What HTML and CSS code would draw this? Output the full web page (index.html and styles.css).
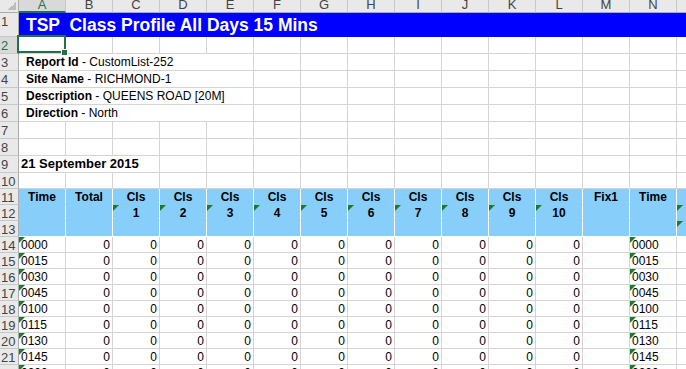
FILE: index.html
```html
<!DOCTYPE html>
<html lang="en">
<head>
    <meta charset="UTF-8">
    <title>TSP Class Profile All Days 15 Mins</title>
    <link rel="stylesheet" href="styles.css">
</head>
<body>
<div class="sheet">
    <!-- column headers -->
    <div class="corner"></div>
    <div class="ch sel">A</div><div class="ch">B</div><div class="ch">C</div><div class="ch">D</div><div class="ch">E</div>
    <div class="ch">F</div><div class="ch">G</div><div class="ch">H</div><div class="ch">I</div><div class="ch">J</div>
    <div class="ch">K</div><div class="ch">L</div><div class="ch">M</div><div class="ch">N</div><div class="ch">O</div>

    <!-- 1 -->
    <div class="rh">1</div>
    <div class="title">TSP  Class Profile All Days 15 Mins</div>

    <!-- 2 -->
    <div class="rh sel">2</div>
    <div class="cur"><span class="handle"></span></div>
    <div></div><div></div><div></div><div></div><div></div><div></div><div></div>
    <div></div><div></div><div></div><div></div><div></div><div></div><div></div>

    <!-- 3 -->
    <div class="rh">3</div>
    <div class="info"><b>Report Id</b> - CustomList-252</div>
    <div></div><div></div><div></div><div></div><div></div><div></div><div></div><div></div><div></div><div></div>

    <!-- 4 -->
    <div class="rh">4</div>
    <div class="info"><b>Site Name</b> - RICHMOND-1</div>
    <div></div><div></div><div></div><div></div><div></div><div></div><div></div><div></div><div></div><div></div>

    <!-- 5 -->
    <div class="rh">5</div>
    <div class="info"><b>Description</b> - QUEENS ROAD [20M]</div>
    <div></div><div></div><div></div><div></div><div></div><div></div><div></div><div></div><div></div><div></div>

    <!-- 6 -->
    <div class="rh">6</div>
    <div class="info"><b>Direction</b> - North</div>
    <div></div><div></div><div></div><div></div><div></div><div></div><div></div><div></div><div></div><div></div>

    <!-- 7 -->
    <div class="rh">7</div>
    <div></div><div></div><div></div><div></div><div></div><div></div><div></div><div></div>
    <div></div><div></div><div></div><div></div><div></div><div></div><div></div>

    <!-- 8 -->
    <div class="rh">8</div>
    <div></div><div></div><div></div><div></div><div></div><div></div><div></div><div></div>
    <div></div><div></div><div></div><div></div><div></div><div></div><div></div>

    <!-- 9 -->
    <div class="rh">9</div>
    <div class="date">21 September 2015</div>
    <div></div><div></div><div></div><div></div><div></div><div></div>
    <div></div><div></div><div></div><div></div><div></div><div></div>

    <!-- 10 -->
    <div class="rh">10</div>
    <div></div><div></div><div></div><div></div><div></div><div></div><div></div><div></div>
    <div></div><div></div><div></div><div></div><div></div><div></div><div></div>

    <!-- 11: table header -->
    <div class="rh">11</div>
    <div class="hd">Time</div><div class="hd">Total</div>
    <div class="hd">Cls</div><div class="hd">Cls</div><div class="hd">Cls</div><div class="hd">Cls</div><div class="hd">Cls</div>
    <div class="hd">Cls</div><div class="hd">Cls</div><div class="hd">Cls</div><div class="hd">Cls</div><div class="hd">Cls</div>
    <div class="hd">Fix1</div><div class="hd">Time</div><div class="hd"></div>

    <!-- 12 -->
    <div class="rh">12</div>
    <div class="hd"></div><div class="hd"></div>
    <div class="hd err">1</div><div class="hd err">2</div><div class="hd err">3</div><div class="hd err">4</div><div class="hd err">5</div>
    <div class="hd err">6</div><div class="hd err">7</div><div class="hd err">8</div><div class="hd err">9</div><div class="hd err">10</div>
    <div class="hd"></div><div class="hd"></div><div class="hd err"></div>

    <!-- 13 -->
    <div class="rh">13</div>
    <div class="hd end"></div><div class="hd end"></div><div class="hd end"></div><div class="hd end"></div><div class="hd end"></div>
    <div class="hd end"></div><div class="hd end"></div><div class="hd end"></div><div class="hd end"></div><div class="hd end"></div>
    <div class="hd end"></div><div class="hd end"></div><div class="hd end"></div><div class="hd end"></div><div class="hd end err"></div>

    <!-- 14 -->
    <div class="rh">14</div>
    <div class="err">0000</div>
    <div class="num">0</div><div class="num">0</div><div class="num">0</div><div class="num">0</div><div class="num">0</div><div class="num">0</div>
    <div class="num">0</div><div class="num">0</div><div class="num">0</div><div class="num">0</div><div class="num">0</div>
    <div></div><div class="err">0000</div><div></div>

    <!-- 15 -->
    <div class="rh">15</div>
    <div class="err">0015</div>
    <div class="num">0</div><div class="num">0</div><div class="num">0</div><div class="num">0</div><div class="num">0</div><div class="num">0</div>
    <div class="num">0</div><div class="num">0</div><div class="num">0</div><div class="num">0</div><div class="num">0</div>
    <div></div><div class="err">0015</div><div></div>

    <!-- 16 -->
    <div class="rh">16</div>
    <div class="err">0030</div>
    <div class="num">0</div><div class="num">0</div><div class="num">0</div><div class="num">0</div><div class="num">0</div><div class="num">0</div>
    <div class="num">0</div><div class="num">0</div><div class="num">0</div><div class="num">0</div><div class="num">0</div>
    <div></div><div class="err">0030</div><div></div>

    <!-- 17 -->
    <div class="rh">17</div>
    <div class="err">0045</div>
    <div class="num">0</div><div class="num">0</div><div class="num">0</div><div class="num">0</div><div class="num">0</div><div class="num">0</div>
    <div class="num">0</div><div class="num">0</div><div class="num">0</div><div class="num">0</div><div class="num">0</div>
    <div></div><div class="err">0045</div><div></div>

    <!-- 18 -->
    <div class="rh">18</div>
    <div class="err">0100</div>
    <div class="num">0</div><div class="num">0</div><div class="num">0</div><div class="num">0</div><div class="num">0</div><div class="num">0</div>
    <div class="num">0</div><div class="num">0</div><div class="num">0</div><div class="num">0</div><div class="num">0</div>
    <div></div><div class="err">0100</div><div></div>

    <!-- 19 -->
    <div class="rh">19</div>
    <div class="err">0115</div>
    <div class="num">0</div><div class="num">0</div><div class="num">0</div><div class="num">0</div><div class="num">0</div><div class="num">0</div>
    <div class="num">0</div><div class="num">0</div><div class="num">0</div><div class="num">0</div><div class="num">0</div>
    <div></div><div class="err">0115</div><div></div>

    <!-- 20 -->
    <div class="rh">20</div>
    <div class="err">0130</div>
    <div class="num">0</div><div class="num">0</div><div class="num">0</div><div class="num">0</div><div class="num">0</div><div class="num">0</div>
    <div class="num">0</div><div class="num">0</div><div class="num">0</div><div class="num">0</div><div class="num">0</div>
    <div></div><div class="err">0130</div><div></div>

    <!-- 21 -->
    <div class="rh">21</div>
    <div class="err">0145</div>
    <div class="num">0</div><div class="num">0</div><div class="num">0</div><div class="num">0</div><div class="num">0</div><div class="num">0</div>
    <div class="num">0</div><div class="num">0</div><div class="num">0</div><div class="num">0</div><div class="num">0</div>
    <div></div><div class="err">0145</div><div></div>

    <!-- 22 -->
    <div class="rh">22</div>
    <div class="err">0200</div>
    <div class="num">0</div><div class="num">0</div><div class="num">0</div><div class="num">0</div><div class="num">0</div><div class="num">0</div>
    <div class="num">0</div><div class="num">0</div><div class="num">0</div><div class="num">0</div><div class="num">0</div>
    <div></div><div class="err">0200</div><div></div>
</div>
</body>
</html>
```

FILE: styles.css
```css
:root {
    --grid: #d4d4d4;
    --head-bg: #e9e9e9;
    --head-line: #ababab;
    --head-sep: #c8c8c8;
    --excel-green: #217346;
    --flag: #1d7a2a;
    --title-bg: #0000ff;
    --table-head: #87cefa;
}

* {
    box-sizing: border-box;
    margin: 0;
    padding: 0;
}

body {
    background: #fff;
    overflow: hidden;
    font-family: "Liberation Sans", Arial, sans-serif;
}

.sheet {
    display: grid;
    grid-template-columns: 19px repeat(15, 47px);
    grid-template-rows: 13px 24px repeat(8, 17px) repeat(13, 16px);
    width: 724px;
}

/* every cell */
.sheet > div {
    border-right: 1px solid var(--grid);
    border-bottom: 1px solid var(--grid);
    padding: 2px 2px 0 2px;
    font-size: 12px;
    line-height: 13px;
    white-space: nowrap;
    color: #000;
}

/* headers */
.sheet > .corner {
    background: var(--head-bg) linear-gradient(to bottom right, transparent 50%, #bdbdbd 50%) no-repeat right 2px bottom 2px / 8px 8px;
    border-right: 1px solid var(--head-line);
    border-bottom: 1px solid var(--head-line);
}

.sheet > .ch {
    background: var(--head-bg);
    border-right: 1px solid var(--head-sep);
    border-bottom: 1px solid var(--head-line);
    color: #444;
    font-size: 13px;
    line-height: 9px;
    padding: 0;
    text-align: center;
    overflow: hidden;
}

.sheet > .rh {
    background: var(--head-bg);
    border-right: 1px solid var(--head-line);
    border-bottom: 1px solid var(--head-sep);
    color: #444;
    font-size: 13px;
    padding: 2px 0 0 1px;
    overflow: hidden;
}

.sheet > .ch.sel {
    background: #d9d9d9;
    color: var(--excel-green);
    border-bottom: 2px solid var(--excel-green);
}

.sheet > .rh.sel {
    background: #d9d9d9;
    color: var(--excel-green);
    border-right: 2px solid var(--excel-green);
}

/* content */
.sheet > .title {
    grid-column: span 15;
    background: var(--title-bg);
    border: 0;
    color: #fff;
    font-size: 17.5px;
    font-weight: bold;
    line-height: 24px;
    padding: 0 0 0 7px;
    white-space: pre;
}

.sheet > .info {
    grid-column: span 5;
    padding-left: 7px;
}

.sheet > .date {
    grid-column: span 3;
    font-size: 13px;
    font-weight: bold;
    padding-top: 1px;
}

.sheet > .hd {
    background: var(--table-head);
    border-right-color: #fff;
    border-bottom-color: var(--table-head);
    font-weight: bold;
    text-align: center;
}

.sheet > .hd.end {
    border-bottom-color: #fff;
}

.sheet > .num {
    text-align: right;
}

/* green "number stored as text" flag */
.err {
    position: relative;
}

.err::before {
    content: "";
    position: absolute;
    left: 0;
    top: 0;
    border-top: 6px solid var(--flag);
    border-right: 6px solid transparent;
}

/* active cell */
.cur {
    position: relative;
    z-index: 2;
}

.cur::after {
    content: "";
    position: absolute;
    left: -2px;
    top: -2px;
    right: -1px;
    bottom: 0;
    border: 2px solid var(--excel-green);
}

.handle {
    position: absolute;
    right: -3px;
    bottom: -3px;
    width: 7px;
    height: 7px;
    background: var(--excel-green);
    border: 1px solid #fff;
    z-index: 1;
}
```
